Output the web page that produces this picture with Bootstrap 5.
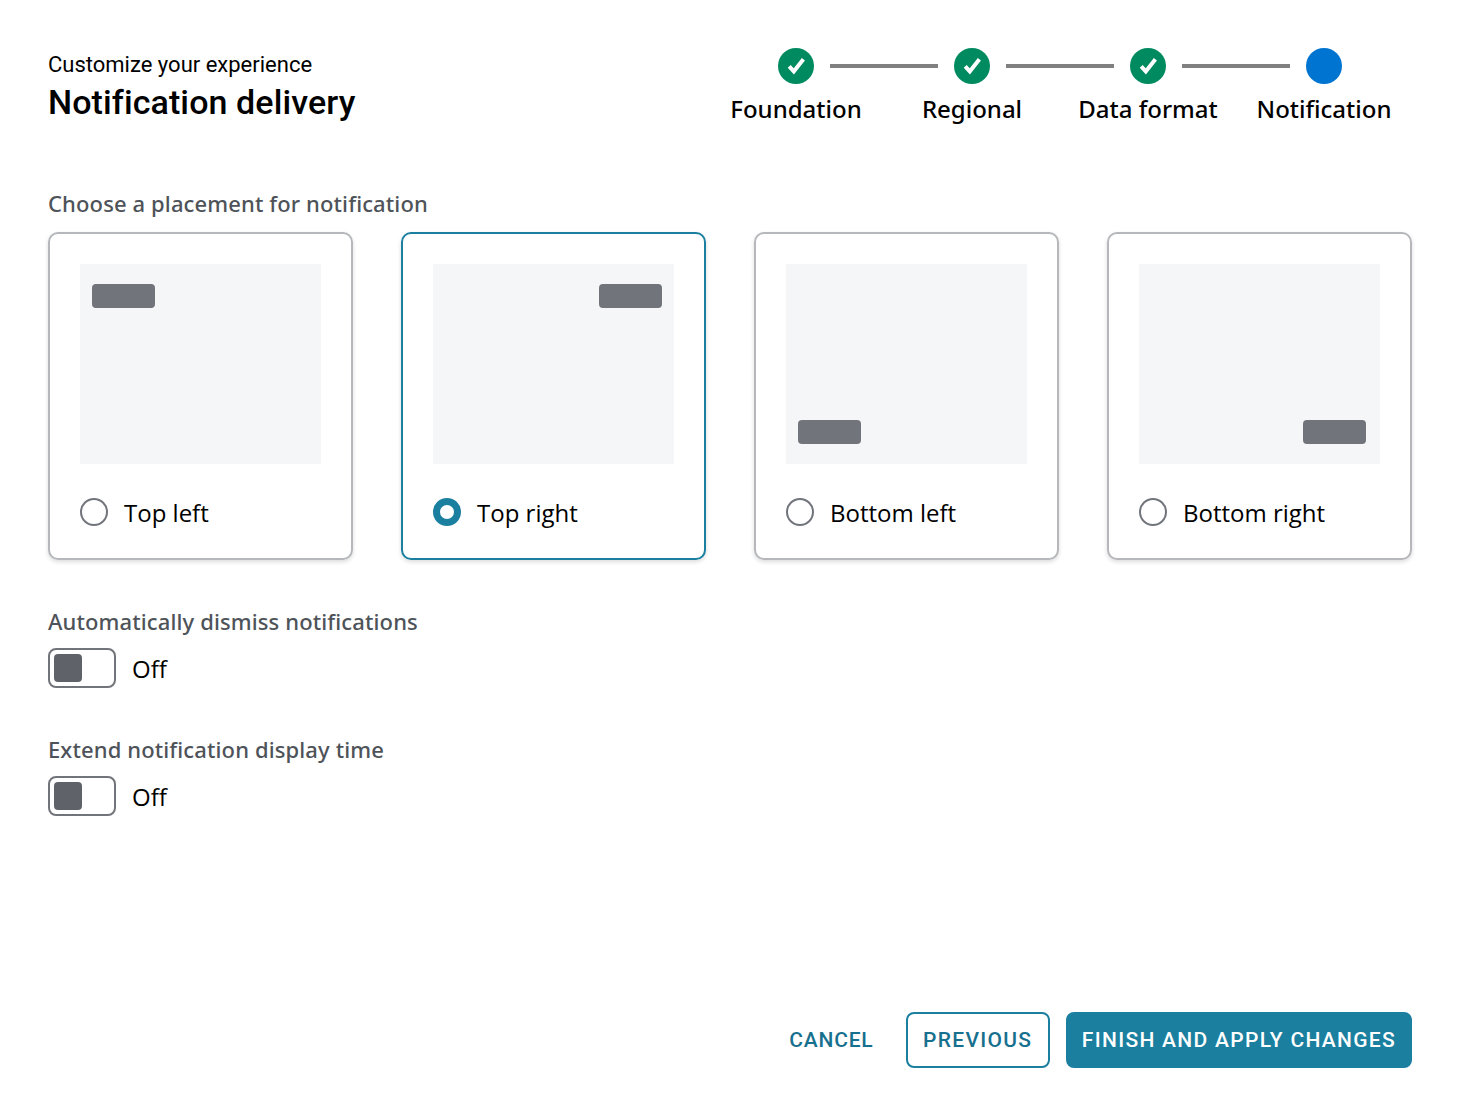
<!DOCTYPE html>
<html lang="en">
  <head>
    <meta charset="UTF-8" />
    <meta name="viewport" content="width=device-width, initial-scale=1" />
    <title>Notification delivery</title>
    <link href="https://cdn.jsdelivr.net/npm/bootstrap@5.3.0/dist/css/bootstrap.min.css" rel="stylesheet" />
    <style>
      body {
        font-family: "Open Sans", sans-serif;
        color: #000;
        background: #fff;
      }
      .page {
        width: 1460px;
        height: 1116px;
        padding: 48px;
      }
      .eyebrow {
        font-family: Roboto, sans-serif;
        font-size: 22px;
        line-height: 34px;
      }
      .title {
        font-family: Roboto, sans-serif;
        font-size: 34px;
        font-weight: 500;
        line-height: 40px;
        margin: 0;
        letter-spacing: .1px;
      }
      .stepper {
        display: grid;
        grid-template-columns: repeat(4, 176px);
      }
      .step {
        display: flex;
        flex-direction: column;
        align-items: center;
      }
      .step-top {
        display: flex;
        justify-content: center;
        width: 100%;
        height: 36px;
        position: relative;
      }
      .step-dot {
        width: 36px;
        height: 36px;
        border-radius: 50%;
      }
      .step-dot svg { display: block; }
      .step-dot.done { background: #008a5f; }
      .step-dot.current { background: #0074d1; }
      .step-line {
        position: absolute;
        left: 122px;
        top: 16px;
        width: 108px;
        height: 4px;
        background: #808080;
      }
      .step-label {
        font-family: "Noto Sans", "Open Sans", sans-serif;
        font-size: 24px;
        font-weight: 500;
        line-height: 32px;
        margin-top: 9px;
        white-space: nowrap;
      }
      .field-label {
        font-family: "Noto Sans", "Open Sans", sans-serif;
        font-size: 22px;
        font-weight: 500;
        line-height: 32px;
        color: #4e5359;
        letter-spacing: .12px;
      }
      .placement-label { margin-top: 62px; margin-bottom: 13px; }
      .placement-row { gap: 48px; }
      .place-card {
        width: 305px;
        height: 328px;
        margin: 0;
        padding: 30px;
        border: 2px solid #b5b7ba;
        border-radius: 10px;
        box-shadow: 0 2px 4px rgba(0, 0, 0, .14);
      }
      .place-card.selected { border-color: #1b7fa0; }
      .preview {
        height: 200px;
        padding: 20px 12px;
        background: #f5f6f8;
      }
      .chip {
        width: 63px;
        height: 24px;
        background: #71757b;
        border-radius: 4px;
      }
      .chip.inset { margin-right: 2px; }
      .radio-row { margin-top: 31px; }
      .place-card .form-check-input {
        width: 28px;
        height: 28px;
        margin: 0;
        float: none;
        border: 2px solid #71757b;
        box-shadow: none;
      }
      .place-card .form-check-input:checked {
        background-color: #fff;
        background-image: none;
        border: 7.5px solid #1b7fa0;
      }
      .place-card .form-check-label {
        font-size: 24px;
        line-height: 32px;
        padding-top: 2px;
      }
      .toggle-label { margin-top: 45px; margin-bottom: 11px; }
      .toggle {
        width: 68px;
        height: 40px;
        padding: 4px;
        border: 2px solid #71757b;
        border-radius: 8px;
      }
      .toggle-knob {
        width: 28px;
        height: 28px;
        background: #5f6369;
        border-radius: 4px;
      }
      .toggle-text {
        font-size: 24px;
        line-height: 32px;
        padding-top: 2px;
      }
      .btn-action {
        font-family: Roboto, sans-serif;
        font-size: 21px;
        font-weight: 500;
        letter-spacing: 1.3px;
        height: 56px;
        padding: 2px 14px 0;
        border-radius: 8px;
        border-width: 2px;
        color: #17708e;
      }
      .btn-cancel { border-color: transparent; letter-spacing: .8px; }
      .btn-prev { border-color: #1b7fa0; padding-inline: 15.5px; }
      .btn-finish { background: #1b7fa0; border-color: #1b7fa0; color: #fff; }
    </style>
  </head>
  <body>
    <div class="page d-flex flex-column">
      <!-- Header and stepper -->
      <div class="d-flex justify-content-between align-items-start">
        <div>
          <div class="eyebrow">Customize your experience</div>
          <h1 class="title">Notification delivery</h1>
        </div>
        <div class="stepper">
          <div class="step">
            <div class="step-top">
              <span class="step-dot done">
                <svg width="36" height="36" viewBox="0 0 36 36"><path d="M11.2 18.4 15.8 23.4 25.4 11.2" fill="none" stroke="#fff" stroke-width="4" /></svg>
              </span>
              <span class="step-line"></span>
            </div>
            <div class="step-label">Foundation</div>
          </div>
          <div class="step">
            <div class="step-top">
              <span class="step-dot done">
                <svg width="36" height="36" viewBox="0 0 36 36"><path d="M11.2 18.4 15.8 23.4 25.4 11.2" fill="none" stroke="#fff" stroke-width="4" /></svg>
              </span>
              <span class="step-line"></span>
            </div>
            <div class="step-label">Regional</div>
          </div>
          <div class="step">
            <div class="step-top">
              <span class="step-dot done">
                <svg width="36" height="36" viewBox="0 0 36 36"><path d="M11.2 18.4 15.8 23.4 25.4 11.2" fill="none" stroke="#fff" stroke-width="4" /></svg>
              </span>
              <span class="step-line"></span>
            </div>
            <div class="step-label">Data format</div>
          </div>
          <div class="step">
            <div class="step-top"><span class="step-dot current"></span></div>
            <div class="step-label">Notification</div>
          </div>
        </div>
      </div>

      <!-- Placement -->
      <div class="field-label placement-label">Choose a placement for notification</div>
      <div class="d-flex placement-row">
        <label class="place-card d-block">
          <div class="preview d-flex flex-column"><div class="chip"></div></div>
          <div class="d-flex align-items-center gap-3 radio-row">
            <input class="form-check-input" type="radio" name="placement" />
            <span class="form-check-label">Top left</span>
          </div>
        </label>
        <label class="place-card selected d-block">
          <div class="preview d-flex flex-column align-items-end"><div class="chip"></div></div>
          <div class="d-flex align-items-center gap-3 radio-row">
            <input class="form-check-input" type="radio" name="placement" checked />
            <span class="form-check-label">Top right</span>
          </div>
        </label>
        <label class="place-card d-block">
          <div class="preview d-flex flex-column justify-content-end"><div class="chip"></div></div>
          <div class="d-flex align-items-center gap-3 radio-row">
            <input class="form-check-input" type="radio" name="placement" />
            <span class="form-check-label">Bottom left</span>
          </div>
        </label>
        <label class="place-card d-block">
          <div class="preview d-flex flex-column justify-content-end align-items-end"><div class="chip inset"></div></div>
          <div class="d-flex align-items-center gap-3 radio-row">
            <input class="form-check-input" type="radio" name="placement" />
            <span class="form-check-label">Bottom right</span>
          </div>
        </label>
      </div>

      <!-- Toggles -->
      <div class="field-label toggle-label">Automatically dismiss notifications</div>
      <div class="d-flex align-items-center gap-3">
        <div class="toggle"><div class="toggle-knob"></div></div>
        <span class="toggle-text">Off</span>
      </div>
      <div class="field-label toggle-label">Extend notification display time</div>
      <div class="d-flex align-items-center gap-3">
        <div class="toggle"><div class="toggle-knob"></div></div>
        <span class="toggle-text">Off</span>
      </div>

      <!-- Actions -->
      <div class="d-flex justify-content-end gap-3 mt-auto">
        <button type="button" class="btn btn-action btn-cancel">CANCEL</button>
        <button type="button" class="btn btn-action btn-prev">PREVIOUS</button>
        <button type="button" class="btn btn-action btn-finish">FINISH AND APPLY CHANGES</button>
      </div>
    </div>
    <script src="https://cdn.jsdelivr.net/npm/bootstrap@5.3.0/dist/js/bootstrap.bundle.min.js"></script>
  </body>
</html>
